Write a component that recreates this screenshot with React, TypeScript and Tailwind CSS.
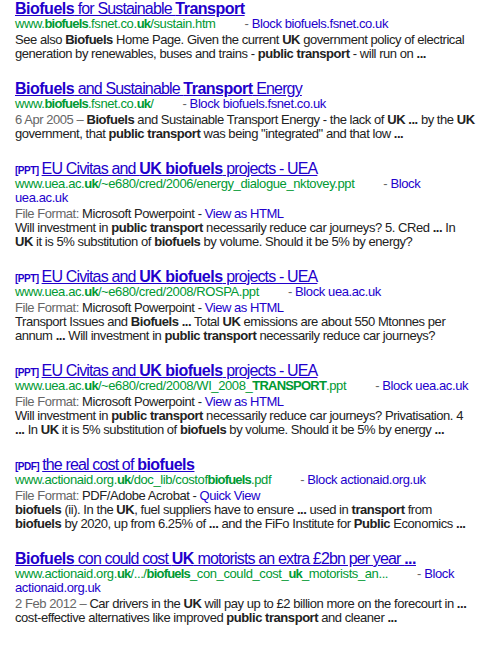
import React from "react";

type Result = {
  tag?: string;
  title: React.ReactNode;
  url: React.ReactNode;
  block: string;
  format?: { label: string; link: string };
  date?: string;
  snippet: React.ReactNode;
};

const results: Result[] = [
  {
    title: (<><b>Biofuels</b> for Sustainable <b>Transport</b></>),
    url: (<>www.<b>biofuels</b>.fsnet.co.<b>uk</b>/sustain.htm</>),
    block: "biofuels.fsnet.co.uk",
    snippet: (
      <>
        See also <b>Biofuels</b> Home Page. Given the current <b>UK</b> government policy of electrical generation by
        renewables, buses and trains - <b>public transport</b> - will run on <b>...</b>
      </>
    ),
  },
  {
    title: (<><b>Biofuels</b> and Sustainable <b>Transport</b> Energy</>),
    url: (<>www.<b>biofuels</b>.fsnet.co.<b>uk</b>/</>),
    block: "biofuels.fsnet.co.uk",
    date: "6 Apr 2005",
    snippet: (
      <>
        <b>Biofuels</b> and Sustainable Transport Energy - the lack of <b>UK ...</b> by the <b>UK</b> government, that{" "}
        <b>public transport</b> was being "integrated" and that low <b>...</b>
      </>
    ),
  },
  {
    tag: "[PPT]",
    title: (<>EU Civitas and <b>UK biofuels</b> projects - UEA</>),
    url: (<>www.uea.ac.<b>uk</b>/~e680/cred/2006/energy_dialogue_nktovey.ppt</>),
    block: "uea.ac.uk",
    format: { label: "Microsoft Powerpoint", link: "View as HTML" },
    snippet: (
      <>
        Will investment in <b>public transport</b> necessarily reduce car journeys? 5. CRed <b>...</b> In <b>UK</b> it is
        5% substitution of <b>biofuels</b> by volume. Should it be 5% by energy?
      </>
    ),
  },
  {
    tag: "[PPT]",
    title: (<>EU Civitas and <b>UK biofuels</b> projects - UEA</>),
    url: (<>www.uea.ac.<b>uk</b>/~e680/cred/2008/ROSPA.ppt</>),
    block: "uea.ac.uk",
    format: { label: "Microsoft Powerpoint", link: "View as HTML" },
    snippet: (
      <>
        Transport Issues and <b>Biofuels ...</b> Total <b>UK</b> emissions are about 550 Mtonnes per annum <b>...</b> Will
        investment in <b>public transport</b> necessarily reduce car journeys?
      </>
    ),
  },
  {
    tag: "[PPT]",
    title: (<>EU Civitas and <b>UK biofuels</b> projects - UEA</>),
    url: (<>www.uea.ac.<b>uk</b>/~e680/cred/2008/WI_2008_<b>TRANSPORT</b>.ppt</>),
    block: "uea.ac.uk",
    format: { label: "Microsoft Powerpoint", link: "View as HTML" },
    snippet: (
      <>
        Will investment in <b>public transport</b> necessarily reduce car journeys? Privatisation. 4 <b>...</b> In{" "}
        <b>UK</b> it is 5% substitution of <b>biofuels</b> by volume. Should it be 5% by energy <b>...</b>
      </>
    ),
  },
  {
    tag: "[PDF]",
    title: (<>the real cost of <b>biofuels</b></>),
    url: (<>www.actionaid.org.<b>uk</b>/doc_lib/costof<b>biofuels</b>.pdf</>),
    block: "actionaid.org.uk",
    format: { label: "PDF/Adobe Acrobat", link: "Quick View" },
    snippet: (
      <>
        <b>biofuels</b> (ii). In the <b>UK</b>, fuel suppliers have to ensure <b>...</b> used in <b>transport</b> from{" "}
        <b>biofuels</b> by 2020, up from 6.25% of <b>...</b> and the FiFo Institute for <b>Public</b> Economics <b>...</b>
      </>
    ),
  },
  {
    title: (<><b>Biofuels</b> con could cost <b>UK</b> motorists an extra £2bn per year <b>...</b></>),
    url: (<>www.actionaid.org.<b>uk</b>/.../<b>biofuels</b>_con_could_cost_<b>uk</b>_motorists_an...</>),
    block: "actionaid.org.uk",
    date: "2 Feb 2012",
    snippet: (
      <>
        Car drivers in the <b>UK</b> will pay up to £2 billion more on the forecourt in <b>...</b> cost-effective
        alternatives like improved <b>public transport</b> and cleaner <b>...</b>
      </>
    ),
  },
];

function ResultItem({ r }: { r: Result }) {
  return (
    <div className="mb-[19px]">
      <div className="text-[16px] leading-[17px] tracking-[-0.85px] [&_b]:tracking-[-0.5px]">
        {r.tag && (
          <span className="mr-[3px] text-[10px] leading-[10px] font-bold tracking-[-0.5px] text-[#2200cc]">
            {r.tag}
          </span>
        )}
        <a className="text-[#2200cc] underline">{r.title}</a>
      </div>
      <div className="w-[455px] leading-[14px] tracking-[-0.4px] [&_b]:tracking-[-0.8px]">
        <span className="text-[#009933]">{r.url}</span>
        <span className="ml-[29px] text-[#666]">- </span>
        <a className="text-[#2200cc]">Block {r.block}</a>
      </div>
      <div className="mt-[2px] leading-[14px] tracking-[-0.45px] text-[#222]">
        {r.format && (
          <div>
            <span className="text-[#666]">File Format: </span>
            {r.format.label} - <a className="text-[#2200cc]">{r.format.link}</a>
          </div>
        )}
        <div>
          {r.date && <span className="text-[#666]">{r.date} – </span>}
          {r.snippet}
        </div>
      </div>
    </div>
  );
}

export default function App() {
  return (
    <div className="min-h-[647px] bg-white pl-[15px] font-['Liberation_Sans',Arial,sans-serif] text-[13px]">
      <div className="w-[460px]">
        {results.map((r, i) => (
          <ResultItem key={i} r={r} />
        ))}
      </div>
    </div>
  );
}
